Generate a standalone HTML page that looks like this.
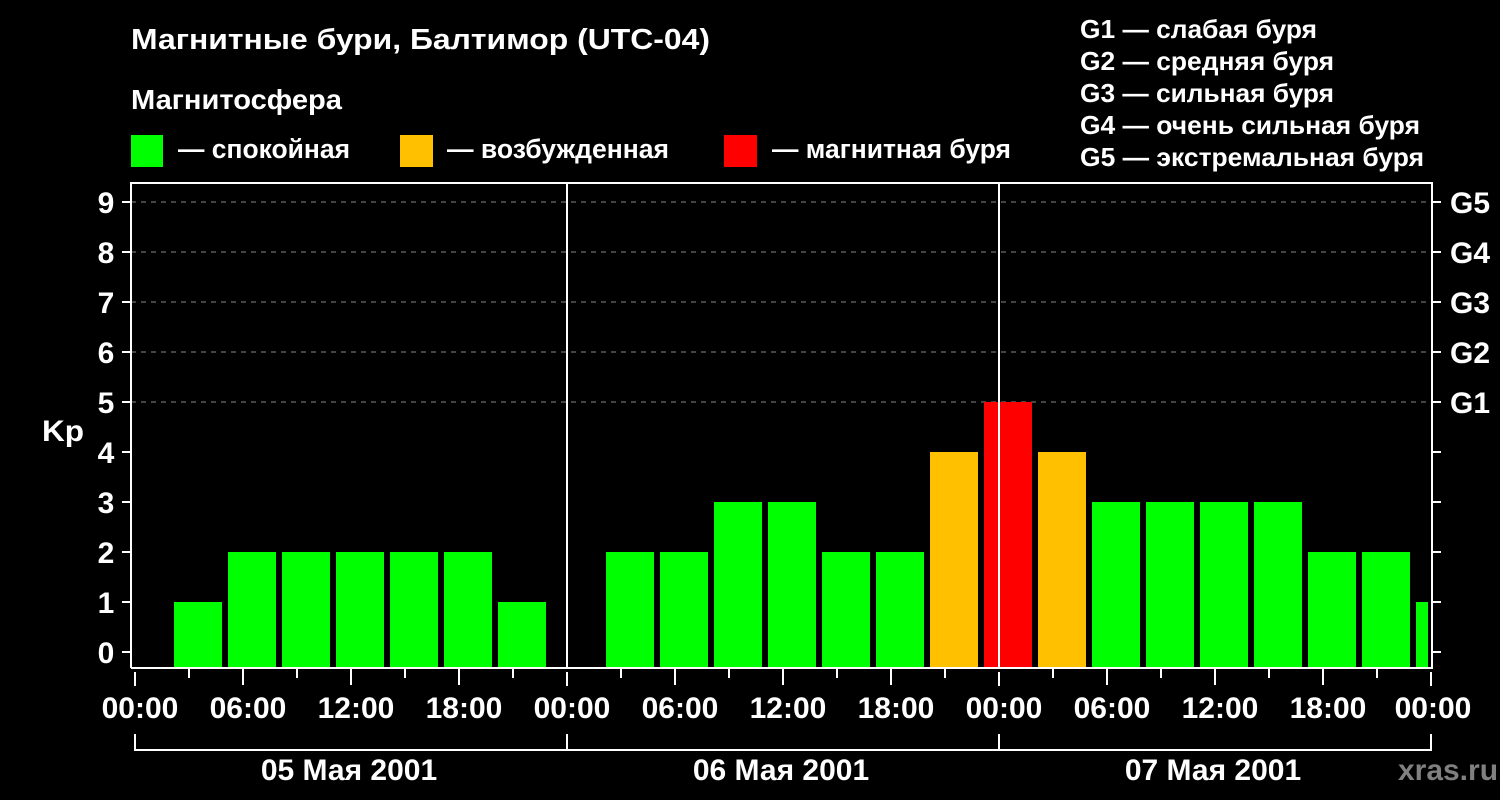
<!DOCTYPE html>
<html><head><meta charset="utf-8"><style>
html,body{margin:0;padding:0;background:#000;}
svg{display:block;}
text{font-family:"Liberation Sans",sans-serif;font-weight:bold;fill:#fff;}
</style></head><body>
<svg width="1500" height="800" viewBox="0 0 1500 800" xmlns="http://www.w3.org/2000/svg">
<rect width="1500" height="800" fill="#000"/>
<text x="131" y="49" font-size="29" textLength="579" lengthAdjust="spacingAndGlyphs">Магнитные бури, Балтимор (UTC-04)</text>
<text x="131" y="109" font-size="28" textLength="211" lengthAdjust="spacingAndGlyphs">Магнитосфера</text>
<rect x="131" y="135" width="32" height="32" fill="#00ff00"/>
<text x="178" y="158" font-size="27" textLength="172" lengthAdjust="spacingAndGlyphs">— спокойная</text>
<rect x="400" y="135" width="33" height="32" fill="#ffc000"/>
<text x="447" y="158" font-size="27" textLength="222" lengthAdjust="spacingAndGlyphs">— возбужденная</text>
<rect x="724" y="135" width="33" height="32" fill="#ff0000"/>
<text x="772" y="158" font-size="27" textLength="239" lengthAdjust="spacingAndGlyphs">— магнитная буря</text>
<g font-size="26">
<text x="1080" y="38" textLength="237" lengthAdjust="spacingAndGlyphs">G1 — слабая буря</text>
<text x="1080" y="70" textLength="254" lengthAdjust="spacingAndGlyphs">G2 — средняя буря</text>
<text x="1080" y="102" textLength="254" lengthAdjust="spacingAndGlyphs">G3 — сильная буря</text>
<text x="1080" y="134" textLength="340" lengthAdjust="spacingAndGlyphs">G4 — очень сильная буря</text>
<text x="1080" y="166" textLength="344" lengthAdjust="spacingAndGlyphs">G5 — экстремальная буря</text>
</g>
<g stroke="#888" stroke-width="1" stroke-dasharray="5,5">
<line x1="131" y1="202" x2="1432" y2="202"/>
<line x1="131" y1="252" x2="1432" y2="252"/>
<line x1="131" y1="302" x2="1432" y2="302"/>
<line x1="131" y1="352" x2="1432" y2="352"/>
<line x1="131" y1="402" x2="1432" y2="402"/>
</g>
<g fill="#00ff00">
<rect x="174" y="602" width="48" height="66"/>
<rect x="228" y="552" width="48" height="116"/>
<rect x="282" y="552" width="48" height="116"/>
<rect x="336" y="552" width="48" height="116"/>
<rect x="390" y="552" width="48" height="116"/>
<rect x="444" y="552" width="48" height="116"/>
<rect x="498" y="602" width="48" height="66"/>
<rect x="606" y="552" width="48" height="116"/>
<rect x="660" y="552" width="48" height="116"/>
<rect x="714" y="502" width="48" height="166"/>
<rect x="768" y="502" width="48" height="166"/>
<rect x="822" y="552" width="48" height="116"/>
<rect x="876" y="552" width="48" height="116"/>
<rect x="1092" y="502" width="48" height="166"/>
<rect x="1146" y="502" width="48" height="166"/>
<rect x="1200" y="502" width="48" height="166"/>
<rect x="1254" y="502" width="48" height="166"/>
<rect x="1308" y="552" width="48" height="116"/>
<rect x="1362" y="552" width="48" height="116"/>
<rect x="1416" y="602" width="12" height="66"/>
</g>
<rect x="930" y="452" width="48" height="216" fill="#ffc000"/>
<rect x="1038" y="452" width="48" height="216" fill="#ffc000"/>
<rect x="984" y="402" width="48" height="266" fill="#ff0000"/>
<g stroke="#fff" stroke-width="2" fill="none">
<polyline points="131,668 131,183 1432,183 1432,668 131,668"/>
<line x1="567" y1="183" x2="567" y2="668"/>
<line x1="999" y1="183" x2="999" y2="668"/>
<path d="M122 202H131M122 252H131M122 302H131M122 352H131M122 402H131M122 452H131M122 502H131M122 552H131M122 602H131M122 652H131"/>
<path d="M1432 202H1441M1432 252H1441M1432 302H1441M1432 352H1441M1432 402H1441M1432 452H1441M1432 502H1441M1432 552H1441M1432 602H1441M1432 652H1441"/>
<path d="M135 734V750H1431V734M567 734V750M999 734V750"/>
<path d="M135 672V686M567 672V686M999 672V686M1431 672V686
M243 668V685M351 668V685M459 668V685M675 668V685M783 668V685M891 668V685M1107 668V685M1215 668V685M1323 668V685
M189 668V678M297 668V678M405 668V678M513 668V678M621 668V678M729 668V678M837 668V678M945 668V678M1053 668V678M1161 668V678M1269 668V678M1377 668V678"/>
</g>
<g font-size="30" text-anchor="middle">
<text x="106" y="213">9</text><text x="106" y="263">8</text><text x="106" y="313">7</text>
<text x="106" y="363">6</text><text x="106" y="413">5</text><text x="106" y="463">4</text>
<text x="106" y="513">3</text><text x="106" y="563">2</text><text x="106" y="613">1</text>
<text x="106" y="663">0</text>
</g>
<text x="42" y="441" font-size="30" textLength="42" lengthAdjust="spacingAndGlyphs">Kp</text>
<g font-size="30">
<text x="1450" y="213">G5</text><text x="1450" y="263">G4</text><text x="1450" y="313">G3</text>
<text x="1450" y="363">G2</text><text x="1450" y="413">G1</text>
</g>
<g font-size="30" text-anchor="middle">
<text x="140" y="718">00:00</text><text x="248" y="718">06:00</text><text x="356" y="718">12:00</text><text x="464" y="718">18:00</text>
<text x="572" y="718">00:00</text><text x="680" y="718">06:00</text><text x="788" y="718">12:00</text><text x="896" y="718">18:00</text>
<text x="1004" y="718">00:00</text><text x="1112" y="718">06:00</text><text x="1220" y="718">12:00</text><text x="1328" y="718">18:00</text>
<text x="1433" y="718">00:00</text>
<text x="349" y="780">05 Мая 2001</text>
<text x="781" y="780">06 Мая 2001</text>
<text x="1213" y="780">07 Мая 2001</text>
</g>
<text x="1448" y="780" font-size="30" text-anchor="middle" style="fill:#808080">xras.ru</text>
</svg>
</body></html>
